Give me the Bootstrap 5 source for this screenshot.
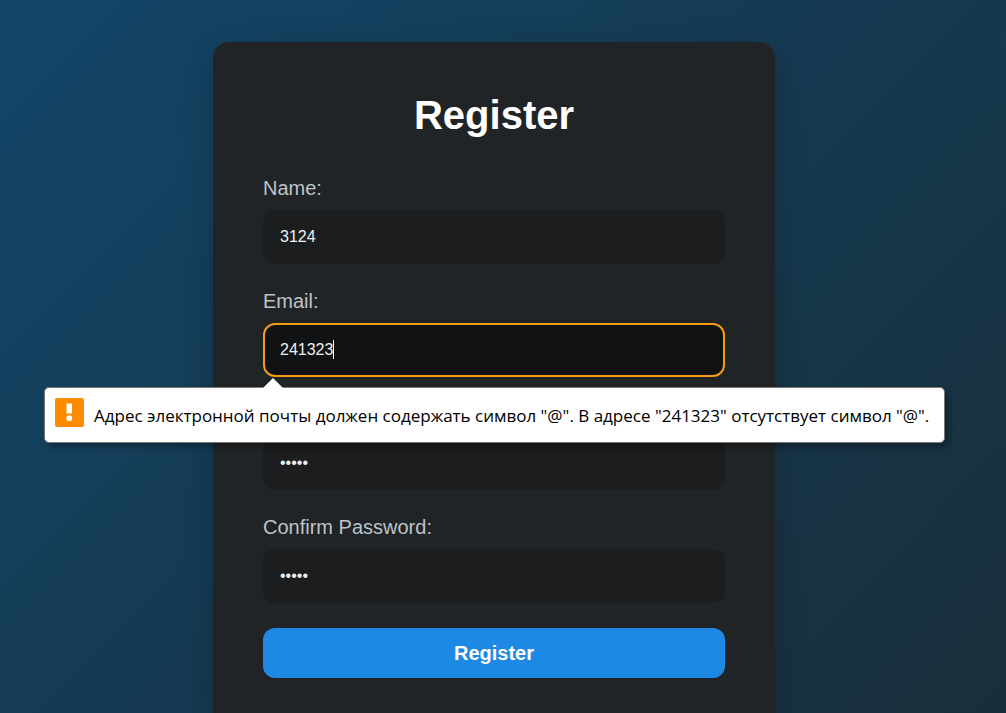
<!DOCTYPE html>
<html lang="en">
<head>
<meta charset="utf-8">
<meta name="viewport" content="width=device-width, initial-scale=1">
<title>Register</title>
<link href="https://cdn.jsdelivr.net/npm/bootstrap@5.3.0/dist/css/bootstrap.min.css" rel="stylesheet">
<style>
body{font-family:"Liberation Sans",Arial,sans-serif;background:linear-gradient(135deg,#124669 0%,#192e3a 100%) fixed;color:#fff}
.page{height:100vh;overflow:hidden;padding:42px 18px 0 0}
.panel{width:100%;max-width:562px;padding:50px;border-radius:16px;background:#212427;box-shadow:0 8px 32px rgba(0,0,0,.2)}
.panel h1{font-size:40px;line-height:46px;font-weight:700;margin-bottom:38px}
.field{margin-bottom:25px}
.field label{font-size:20px;line-height:24px;margin-bottom:10px;color:#bdc3c7}
.field .form-control{height:54px;padding:0 15px;border:2px solid transparent;border-radius:12px;background:#1b1d1f;background-clip:border-box;color:#ecf0f1;font-size:16px;line-height:24px;box-shadow:none}
.field .form-control:focus{background:#111214;border-color:#f39c12;caret-color:transparent}
.caret{left:70px;bottom:18px;width:1px;height:19px;background:#fff}
.btn-send{height:50px;border:0;border-radius:12px;background:#1e88e5;font-size:20px;line-height:24px;font-weight:700;padding:0}
.bubble{left:-219px;top:calc(100% + 10px);width:901px;height:56px;padding:2px 10px 0;border:1px solid #777;border-radius:5px;background:#fff;color:#000;box-shadow:4px 4px 6px rgba(0,0,0,.3);font:17px/24px "Open Sans","Noto Sans",sans-serif;gap:10px;z-index:5}
.bubble-tip{left:218px;top:-11px}
</style>
</head>
<body>
<main class="page d-flex justify-content-center align-items-start">
  <form class="panel" novalidate>
    <h1 class="text-center">Register</h1>
    <div class="field">
      <label class="d-block" for="name">Name:</label>
      <input class="form-control" id="name" type="text" value="3124">
    </div>
    <div class="field position-relative">
      <label class="d-block" for="email">Email:</label>
      <input class="form-control" id="email" type="text" inputmode="email" value="241323" aria-describedby="email-error">
      <span class="caret position-absolute" aria-hidden="true"></span>
      <div class="bubble position-absolute d-flex align-items-center text-nowrap" id="email-error" role="alert">
        <svg class="bubble-tip position-absolute" width="20" height="12" viewBox="0 0 20 12" aria-hidden="true"><path d="M0 12V11L10 1L20 11V12Z" fill="#fff"/></svg>
        <svg class="flex-shrink-0 mb-2" width="29" height="29" viewBox="0 0 29 29" aria-hidden="true"><rect width="29" height="29" rx="2" fill="#ff8c00"/><path d="M11.500 5.500h5.500v10h-5.500z" fill="#fff"/><circle cx="14.300" cy="20.200" r="2.900" fill="#fff"/></svg>
        <span>Адрес электронной почты должен содержать символ "@". В адресе "241323" отсутствует символ "@".</span>
      </div>
    </div>
    <div class="field">
      <label class="d-block invisible" for="password">Password:</label>
      <input class="form-control" id="password" type="password" value="12345">
    </div>
    <div class="field">
      <label class="d-block" for="confirm">Confirm Password:</label>
      <input class="form-control" id="confirm" type="password" value="12345">
    </div>
    <button class="btn btn-primary btn-send w-100" type="submit">Register</button>
  </form>
</main>
<script src="https://cdn.jsdelivr.net/npm/bootstrap@5.3.0/dist/js/bootstrap.bundle.min.js"></script>
<script>
const email = document.getElementById('email');
email.focus();
email.setSelectionRange(email.value.length, email.value.length);
</script>
</body>
</html>
